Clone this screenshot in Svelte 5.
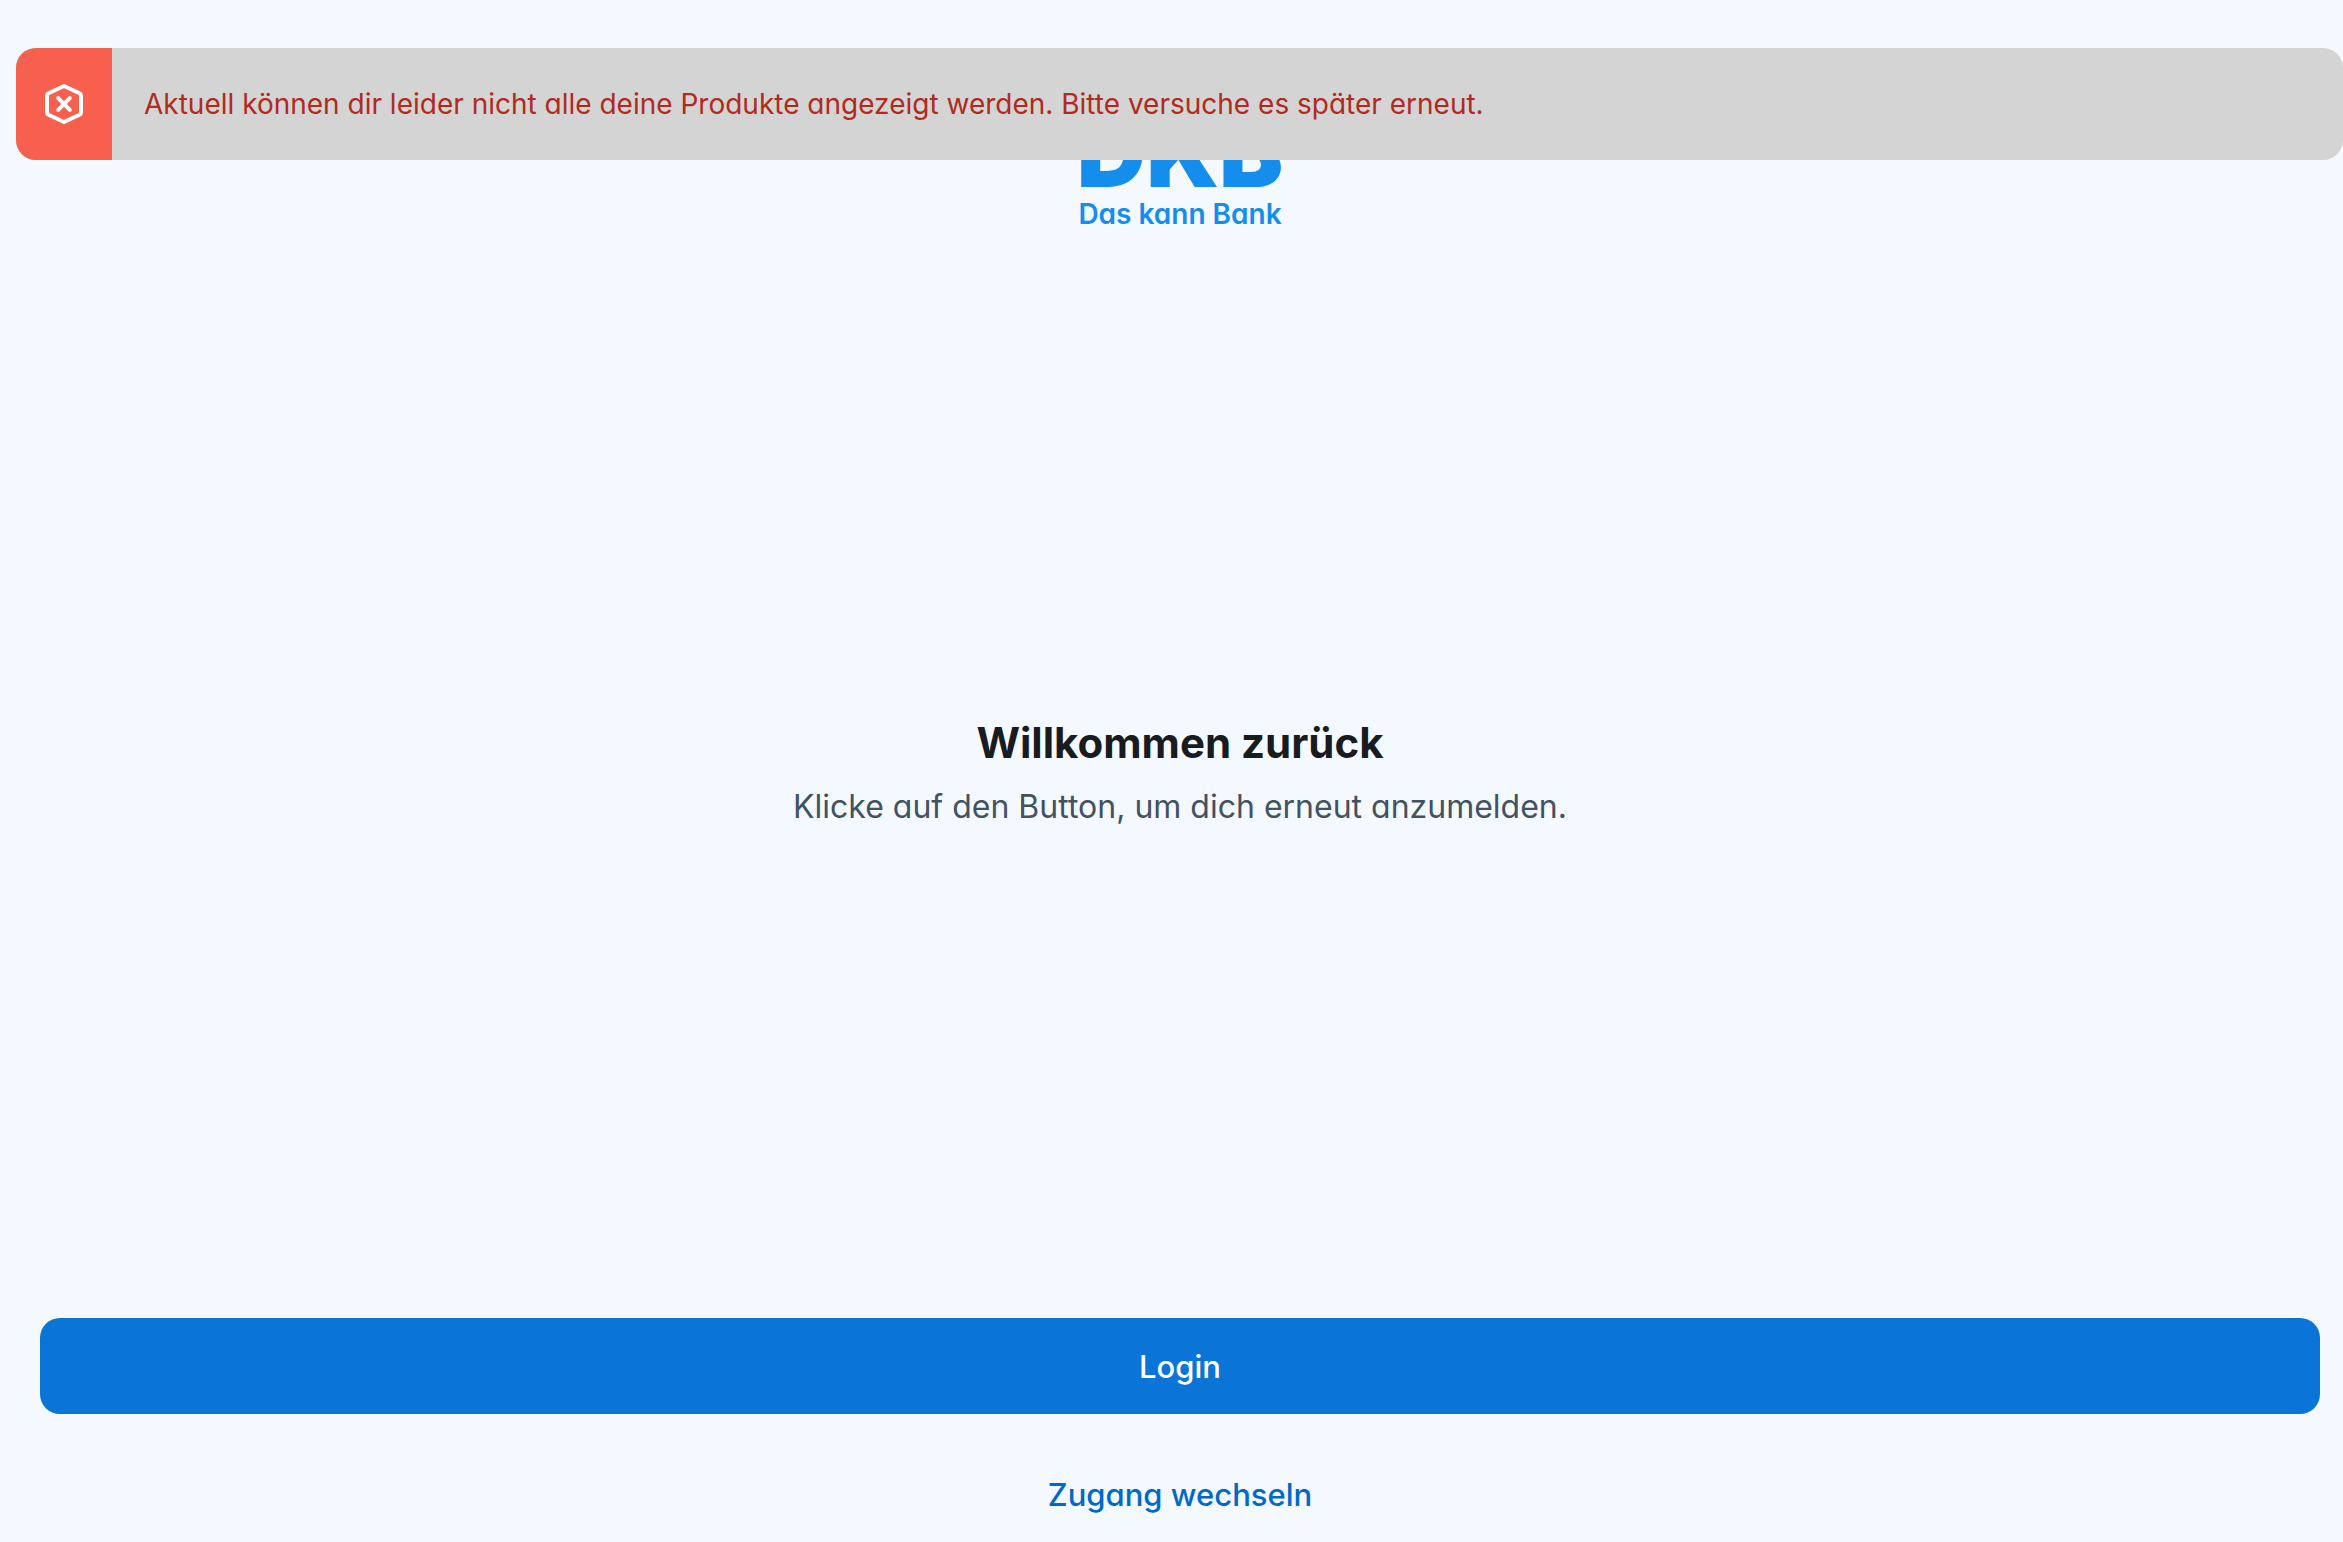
<script>
	let showError = $state(true);
</script>

<div class="page">
	{#if showError}
		<div class="toast" role="alert">
			<div class="toast_icon">
				<svg viewBox="0 0 48 48" width="48" height="48" aria-hidden="true">
					<path d="M24 6 L39.5 13.2 Q41 14 41 15.6 V32.4 Q41 34 39.5 34.8 L24 42 L8.5 34.8 Q7 34 7 32.4 V15.6 Q7 14 8.5 13.2 Z" />
					<path d="M18.2 18.2 L29.8 29.8 M29.8 18.2 L18.2 29.8" />
				</svg>
			</div>
			<p>Aktuell können dir leider nicht alle deine Produkte angezeigt werden. Bitte versuche es später erneut.</p>
		</div>
	{/if}

	<header>
		<div class="logo">
			<span class="brand">DKB</span>
			<span class="claim">Das kann Bank</span>
		</div>
	</header>

	<main>
		<h1>Willkommen zurück</h1>
		<p>Klicke auf den Button, um dich erneut anzumelden.</p>
	</main>

	<footer>
		<button class="login" onclick={() => (showError = false)}>Login</button>
		<button class="switch">Zugang wechseln</button>
	</footer>
</div>

<style>
	:global(body) {
		background: #f4f9ff;
	}

	.page {
		box-sizing: border-box;
		display: flex;
		flex-direction: column;
		min-height: 100vh;
		padding: 104px 23px 0 40px;
		font-family: Inter, "Open Sans", sans-serif;
		/* single-storey a */
		font-feature-settings: "cv11";
	}

	.toast {
		position: absolute;
		top: 48px;
		left: 16px;
		right: 0;
		display: flex;
		min-height: 112px;
		border-radius: 20px;
		overflow: hidden;
		background: #d4d4d4;
		color: #b02a1e;
	}

	.toast_icon {
		display: flex;
		align-items: center;
		justify-content: center;
		width: 96px;
		background: #f75f4e;
	}

	.toast_icon path {
		fill: none;
		stroke: #fff;
		stroke-width: 4;
		stroke-linecap: round;
		stroke-linejoin: round;
	}

	.toast p {
		align-self: center;
		margin: 0;
		padding: 0 32px;
		font-size: 28px;
		line-height: 40px;
	}

	header {
		display: flex;
		justify-content: center;
	}

	.logo {
		display: flex;
		flex-direction: column;
		align-items: center;
		color: #148dec;
	}

	.brand {
		font-size: 96px;
		font-weight: 900;
		line-height: 96px;
	}

	.claim {
		font-size: 28px;
		font-weight: 600;
		line-height: 28px;
	}

	main {
		flex: 1;
		display: flex;
		flex-direction: column;
		align-items: center;
		justify-content: center;
		gap: 12px;
		text-align: center;
	}

	h1 {
		margin: 0;
		color: #191c1e;
		font-size: 42px;
		font-weight: 700;
		line-height: 56px;
	}

	main p {
		margin: 0;
		color: #43525f;
		font-size: 32px;
		line-height: 48px;
	}

	footer {
		display: flex;
		flex-direction: column;
		gap: 32px;
	}

	button {
		height: 96px;
		padding: 0 32px;
		border: 0;
		border-radius: 20px;
		font: inherit;
		font-size: 31px;
		font-weight: 500;
		cursor: pointer;
	}

	.login {
		background: #0a75d7;
		color: #fff;
	}

	.switch {
		background: none;
		color: #0069c8;
	}
</style>
